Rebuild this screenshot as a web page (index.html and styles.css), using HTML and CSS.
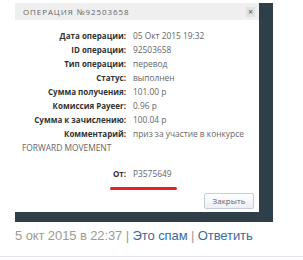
FILE: index.html
```html
<!DOCTYPE html>
<html>
<head>
<meta charset="utf-8">
<link rel="stylesheet" href="styles.css">
</head>
<body>
<div class="shot">
  <div class="modal">
    <div class="modal-head">
      <span class="title">ОПЕРАЦИЯ №92503658</span>
      <span class="x">×</span>
    </div>
    <div class="modal-body">
      <div class="row"><span class="lbl">Дата операции:</span><span class="val">05 Окт 2015 19:32</span></div>
      <div class="row"><span class="lbl">ID операции:</span><span class="val">92503658</span></div>
      <div class="row"><span class="lbl">Тип операции:</span><span class="val">перевод</span></div>
      <div class="row"><span class="lbl">Статус:</span><span class="val">выполнен</span></div>
      <div class="row"><span class="lbl">Сумма получения:</span><span class="val">101.00 р</span></div>
      <div class="row"><span class="lbl">Комиссия Payeer:</span><span class="val">0.96 р</span></div>
      <div class="row"><span class="lbl">Сумма к зачислению:</span><span class="val">100.04 р</span></div>
      <div class="row wrap"><span class="lbl">Комментарий:</span><span class="val">приз за участие в конкурсе FORWARD MOVEMENT</span></div>
      <div class="row from"><span class="lbl">От:</span><span class="val">P3575649</span></div>
      <div class="mark"></div>
      <div class="actions"><span class="btn">Закрыть</span></div>
    </div>
  </div>
</div>
<div class="meta">
  <span class="date">5 окт 2015 в 22:37</span>
  <span class="sep">|</span>
  <a class="link">Это спам</a>
  <span class="sep">|</span>
  <a class="link">Ответить</a>
</div>
<div class="rule"></div>
</body>
</html>
```

FILE: styles.css
```css
html, body {
  margin: 0;
  padding: 0;
  background: #fff;
}
body {
  width: 303px;
  height: 260px;
  overflow: hidden;
}
.shot {
  margin: 3px 0 0 15px;
  width: 258px;
  height: 219px;
  background: #2f3f49;
}
.modal {
  width: 244px;
  height: 209px;
  background: #fff;
  display: flex;
  flex-direction: column;
  font-family: "Open Sans", sans-serif;
  font-size: 8px;
}
.modal-head {
  height: 17px;
  background: #efefef;
  display: flex;
  align-items: center;
  justify-content: space-between;
  padding: 0 4px 0 8px;
}
.title {
  color: #666;
  letter-spacing: 0.9px;
  font-size: 8px;
}
.x {
  width: 9px;
  height: 10px;
  background: #e2e2e2;
  color: #777;
  font-size: 9px;
  font-weight: bold;
  line-height: 10px;
  text-align: center;
}
.modal-body {
  padding: 9px 0 0 7px;
  display: flex;
  flex-direction: column;
}
.row {
  line-height: 14px;
  height: 14px;
  white-space: nowrap;
}
.row.wrap {
  height: auto;
  white-space: normal;
  width: 230px;
}
.lbl {
  display: inline-block;
  width: 104px;
  text-align: right;
  margin-right: 7px;
  font-weight: bold;
  color: #333;
}
.val {
  color: #666;
  font-size: 8.4px;
}
.row.from {
  margin-top: 12px;
}
.mark {
  margin: 6px 0 0 88px;
  width: 67px;
  height: 3px;
  border-radius: 2px;
  background: #e8202a;
}
.actions {
  display: flex;
  justify-content: flex-end;
  padding-right: 5px;
  margin-top: 3px;
}
.btn {
  width: 48px;
  height: 14px;
  border: 1px solid #c6cedb;
  border-radius: 2px;
  background: linear-gradient(#ffffff, #eceff5);
  color: #666;
  font-size: 8px;
  line-height: 14px;
  text-align: center;
}
.meta {
  margin: 6px 0 0 15px;
  font-family: "Liberation Sans", Arial, sans-serif;
  font-size: 13px;
  letter-spacing: -0.1px;
  line-height: 16px;
  color: #a09a94;
  white-space: nowrap;
}
.sep {
  color: #999;
}
.link {
  color: #3d6a9a;
}
.rule {
  margin-top: 12px;
  height: 1px;
  background: #e2e6ee;
}
```
